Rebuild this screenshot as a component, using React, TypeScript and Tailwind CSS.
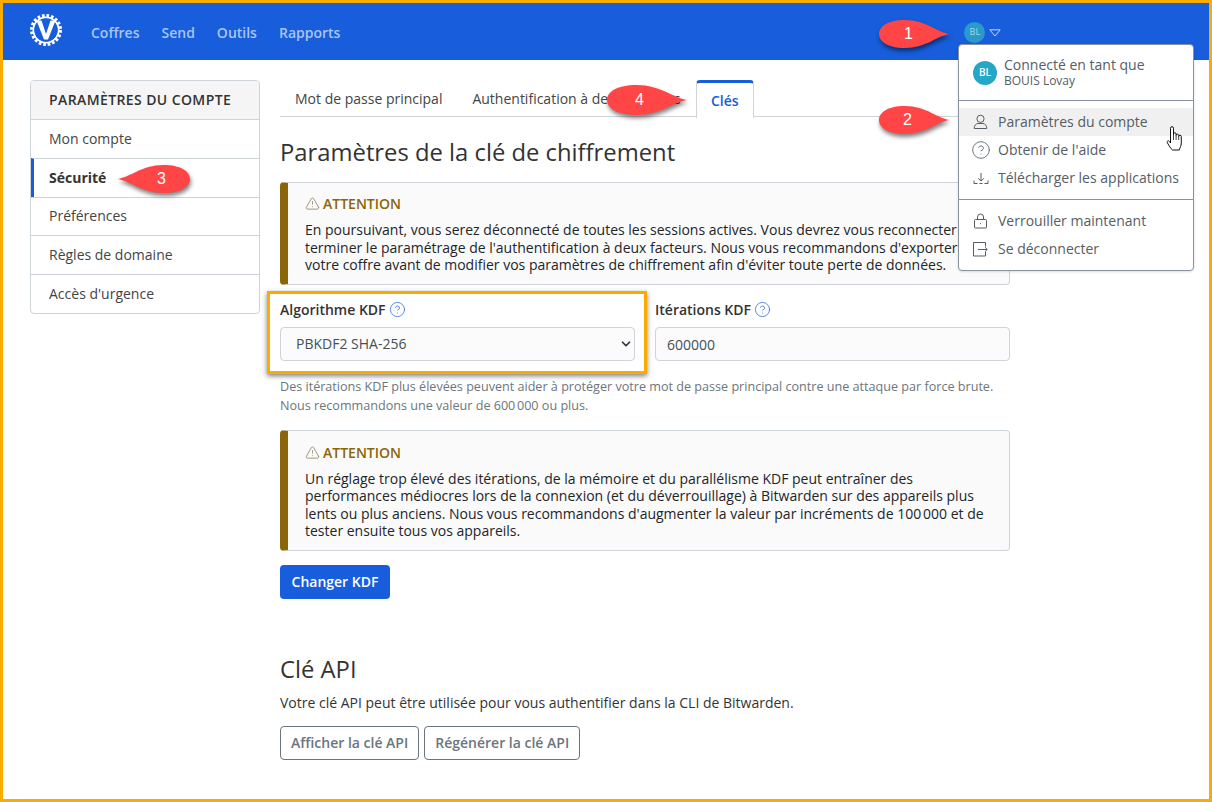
import { ChevronDown, CircleHelp, TriangleAlert } from "lucide-react";

const Logo = () => (
    <svg viewBox="0 0 32 32" className="w-8 h-8">
        <circle cx="16" cy="16" r="14" fill="none" stroke="#fff" strokeWidth="4" strokeDasharray="2.6 1.8" />
        <circle cx="16" cy="16" r="12.6" fill="none" stroke="#fff" strokeWidth="1.800" />
        <circle cx="16" cy="16" r="11.600" fill="#175ddc" />
        <path d="M6.500 6.500h5l4.500 13.500 4.500-13.500h5L18 25.500h-4Z" fill="#fff" />
    </svg>
);

// red teardrop annotation, the text sits on top of the drawing
const Pin = ({ label, className, left, textClass }: { label: string; className: string; left?: boolean; textClass: string }) => (
    <div className={`absolute z-30 ${className}`}>
        <svg viewBox="0 0 72 28" preserveAspectRatio="none" className="w-full h-full drop-shadow-[1px_3px_2px_rgba(0,0,0,0.5)]">
            <path
                d={left
                    ? "M0 14C12 13 24 0 46 0C62 0 72 6 72 14C72 22 62 28 46 28C24 28 12 15 0 14Z"
                    : "M72 14C60 13 48 0 26 0C10 0 0 6 0 14C0 22 10 28 26 28C48 28 60 15 72 14Z"}
                fill="#ff4545"
            />
        </svg>
        <span className={`absolute top-0 h-full flex items-center text-white text-base font-['Liberation_Sans',sans-serif] ${textClass}`}>{label}</span>
    </div>
);

const UserIcon = () => (
    <svg viewBox="0 0 16 16" className="w-4 h-4 shrink-0" fill="none" stroke="#555d66" strokeWidth="1">
        <circle cx="7.500" cy="4.800" r="3.600" />
        <path d="M1.200 14.500c0-3 1.800-5 3.800-5h5c2 0 3.800 2 3.800 5Z" />
    </svg>
);

const DownloadIcon = () => (
    <svg viewBox="0 0 16 16" className="w-4 h-4 shrink-0" fill="none" stroke="#555d66" strokeWidth="1">
        <path d="M8 3v8M5.200 8.400 8 11l2.800-2.600M1 10.500v3h3.500M11.500 13.500H15v-3M6.500 13.500h3" />
    </svg>
);

const LockIcon = () => (
    <svg viewBox="0 0 16 16" className="w-4 h-4 shrink-0" fill="none" stroke="#555d66" strokeWidth="1">
        <rect x="1.500" y="6.500" width="12" height="8.500" rx="1" />
        <path d="M4.500 6.500V4a3 3 0 0 1 6 0v2.500M7.500 10.200v1" />
    </svg>
);

const LogoutIcon = () => (
    <svg viewBox="0 0 16 16" className="w-4 h-4 shrink-0" fill="none" stroke="#555d66" strokeWidth="1">
        <path d="M12.500 5.500V1.500H.5v13.500h12v-4M5 8.500h9M12 6.300l2.300 2.200-2.300 2.200" />
    </svg>
);

const HandCursor = () => (
    <svg viewBox="0 0 18 25" className="absolute z-30 left-[1163px] top-[123px] w-[18px] h-[25px]" fill="#fff" stroke="#111" strokeWidth="1">
        <path d="M4.500 2.200a1.500 1.500 0 0 1 3 0V9V8a1.300 1.300 0 0 1 2.600 0v1.500a1.300 1.300 0 0 1 2.600 0v1a1.300 1.300 0 0 1 2.600 0V17c0 3-1.500 4.500-2 7H6.500c-2-1.500-3.500-4.500-5-7-1-2 .8-3 2-1.500L4.500 17Z" />
        <path d="M7.500 9v5M10.100 9.500V14M12.700 10.500V14" fill="none" strokeWidth=".8" />
    </svg>
);

const Callout = ({ children, topClass }: { children: React.ReactNode; topClass: string }) => (
    <div className={`border border-[#ced4da] border-l-8 border-l-[#8b6609] rounded bg-[#fafafa] pl-[17px] pr-5 pb-[10px] ${topClass}`}>
        <div className="flex items-center gap-[3px] font-semibold text-[#8b6609] leading-[21px] mb-[7px]">
            <TriangleAlert size={15} strokeWidth={1} className="text-[#6b5a35]" />
            ATTENTION
        </div>
        <p className="leading-[17.5px] text-[#212529]">{children}</p>
    </div>
);

const sideItems = ["Mon compte", "Sécurité", "Préférences", "Règles de domaine", "Accès d'urgence"];

export default function App() {
    return (
        <div className="relative h-[802px] border-[3px] border-[#f9ab00] overflow-hidden bg-white text-sm text-[#333] font-['Open_Sans',sans-serif]">
            {/* Nav */}
            <nav className="h-[57px] bg-[#175ddc] flex items-center pl-[27px]">
                <div className="mt-[-3px]"><Logo /></div>
                <div className="flex gap-[22px] ml-[29px] pt-[2px] font-semibold text-[#a9c5f2]">
                    <span>Coffres</span>
                    <span>Send</span>
                    <span>Outils</span>
                    <span>Rapports</span>
                </div>
                <div className="ml-[624px] pt-[2px] flex items-center gap-1">
                    <div className="w-[21px] h-[21px] rounded-full bg-[#2a9acb] text-[#a9d4ea] text-[9px] flex items-center justify-center">BL</div>
                    <svg viewBox="0 0 12 8" className="w-3 h-2" fill="none" stroke="#c5d8f6" strokeWidth="1"><path d="M.8.8h10.400L6 7Z" /></svg>
                </div>
            </nav>

            {/* Page */}
            <div className="flex items-start gap-5 pl-[27px] pt-5">
                <aside className="w-[230px] border border-[#ced4da] rounded overflow-hidden">
                    <div className="h-[38px] flex items-center pl-[18px] bg-[#f5f5f5] font-semibold text-[#333] tracking-[0.4px] uppercase">Paramètres du compte</div>
                    {sideItems.map((item) => (
                        <div
                            key={item}
                            className={item === "Sécurité"
                                ? "h-[38.8px] flex items-center pl-[15px] border-t border-[#ced4da] border-l-[3px] border-l-[#175ddc] font-bold"
                                : "h-[38.8px] flex items-center pl-[18px] border-t border-[#ced4da] text-[#444]"}
                        >
                            {item}
                        </div>
                    ))}
                </aside>

                <main className="w-[730px]">
                    {/* Tabs */}
                    <div className="flex h-[37px] border-b border-[#ced4da] text-[#444]">
                        <div className="px-[15px] pt-[1px] flex items-center">Mot de passe principal</div>
                        <div className="px-[15px] pt-[1px] flex items-center">Authentification à deux facteurs</div>
                        <div className="w-[58px] h-[38px] justify-center flex items-center bg-white border border-[#ced4da] border-b-0 border-t-[3px] border-t-[#175ddc] rounded-t font-semibold text-[#175ddc]">Clés</div>
                    </div>

                    <h1 className="text-[23.8px] leading-[29px] mt-[21px] mb-[15px] text-[#333]">Paramètres de la clé de chiffrement</h1>

                    <Callout topClass="pt-[10px]">
                        En poursuivant, vous serez déconnecté de toutes les sessions actives. Vous devrez vous reconnecter et terminer le paramétrage de l'authentification à deux facteurs. Nous vous recommandons d'exporter votre coffre avant de modifier vos paramètres de chiffrement afin d'éviter toute perte de données.
                    </Callout>

                    <div className="grid grid-cols-2 gap-5 mt-[15px]">
                        <div>
                            <label className="flex items-center gap-[3px] font-semibold leading-[19px] mb-2 text-[#333]">
                                Algorithme KDF <CircleHelp size={17} strokeWidth={1} className="text-[#175ddc]" />
                            </label>
                            <div className="relative">
                                <select defaultValue="PBKDF2" className="appearance-none w-full h-[34px] pl-[15px] pt-[1px] border border-[#ced4da] rounded bg-[#fbfbfb] text-[#465057] text-sm">
                                    <option value="PBKDF2">PBKDF2 SHA-256</option>
                                </select>
                                <ChevronDown size={14} strokeWidth={3} className="absolute right-[2px] top-[10px] text-[#333] pointer-events-none" />
                            </div>
                        </div>
                        <div>
                            <label className="flex items-center gap-[3px] font-semibold leading-[19px] mb-2 text-[#333]">
                                Itérations KDF <CircleHelp size={17} strokeWidth={1} className="text-[#175ddc]" />
                            </label>
                            <input defaultValue="600000" className="w-full h-[34px] px-[11px] pt-[1px] border border-[#ced4da] rounded bg-[#fbfbfb] text-[#465057] text-sm" />
                        </div>
                    </div>

                    <p className="mt-4 text-[12.6px] leading-[19px] text-[#6c757d]">
                        Des itérations KDF plus élevées peuvent aider à protéger votre mot de passe principal contre une attaque par force brute.<br />
                        Nous recommandons une valeur de {"600\u202f000"} ou plus.
                    </p>

                    <div className="mt-[15px]">
                        <Callout topClass="pt-[11px]">
                            Un réglage trop élevé des itérations, de la mémoire et du parallélisme KDF peut entraîner des performances médiocres lors de la connexion (et du déverrouillage) à Bitwarden sur des appareils plus lents ou plus anciens. Nous vous recommandons d'augmenter la valeur par incréments de {"100\u202f000"} et de tester ensuite tous vos appareils.
                        </Callout>
                    </div>

                    <button className="mt-[14px] h-[34px] w-[110px] rounded bg-[#175ddc] text-white font-semibold">Changer KDF</button>

                    <h2 className="text-[23.8px] leading-[29px] mt-14 text-[#333]">Clé API</h2>
                    <p className="mt-[9px] leading-[19px] text-[#333]">Votre clé API peut être utilisée pour vous authentifier dans la CLI de Bitwarden.</p>
                    <div className="flex gap-[5px] mt-[14px]">
                        <button className="h-[34px] px-[10px] rounded border border-[#6c757d] font-semibold text-[#6c757d]">Afficher la clé API</button>
                        <button className="h-[34px] px-[10px] rounded border border-[#6c757d] font-semibold text-[#6c757d]">Régénérer la clé API</button>
                    </div>
                </main>
            </div>

            {/* Account menu */}
            <div className="absolute z-20 left-[955px] top-[41px] w-[236px] h-[227px] rounded border border-[#89929f] bg-white text-[#555d66] shadow-sm">
                <div className="h-[56px] flex items-center gap-[7px] pl-[14px] border-b border-[#89929f]">
                    <div className="w-[24px] h-[24px] rounded-full bg-[#26a7c5] text-white text-[10px] font-semibold flex items-center justify-center">BL</div>
                    <div>
                        <div className="leading-[16px] mt-[-1px]">Connecté en tant que</div>
                        <div className="text-xs leading-[15px]">BOUIS Lovay</div>
                    </div>
                </div>
                <div className="py-[7px] border-b border-[#89929f]">
                    <div className="h-7 flex items-center gap-[9px] pl-[14px] bg-[#f0f0f0]"><UserIcon />Paramètres du compte</div>
                    <div className="h-7 flex items-center gap-[9px] pl-[14px]"><CircleHelp size={16} strokeWidth={1} className="shrink-0 scale-125" />Obtenir de l'aide</div>
                    <div className="h-7 flex items-center gap-[9px] pl-[14px]"><DownloadIcon />Télécharger les applications</div>
                </div>
                <div className="py-[7px]">
                    <div className="h-7 flex items-center gap-[9px] pl-[14px]"><LockIcon />Verrouiller maintenant</div>
                    <div className="h-7 flex items-center gap-[9px] pl-[14px]"><LogoutIcon />Se déconnecter</div>
                </div>
            </div>
            <HandCursor />

            {/* Annotations */}
            <div className="absolute z-10 left-[264px] top-[288px] w-[380px] h-[83px] border-[3px] border-[#f9ab00] shadow-[0_2px_5px_rgba(0,0,0,0.5)]" />
            <Pin label="1" className="left-[876px] top-[17px] w-[71px] h-7" textClass="left-[25px]" />
            <Pin label="2" className="left-[876px] top-[103px] w-[71px] h-7" textClass="left-[24px]" />
            <Pin label="3" left className="left-[114px] top-[162px] w-[73px] h-7" textClass="left-[40px]" />
            <Pin label="4" className="left-[604px] top-[82px] w-[81px] h-[30px]" textClass="left-[28px]" />
        </div>
    );
}
